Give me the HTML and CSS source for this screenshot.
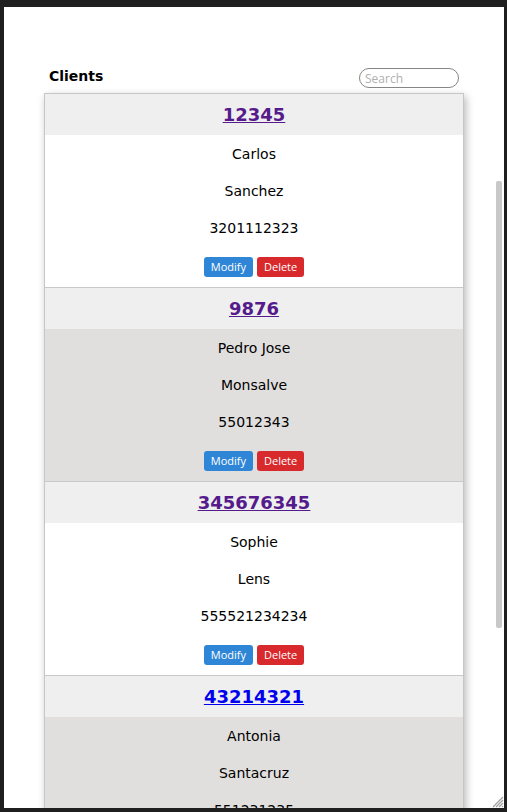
FILE: index.html
```html
<!DOCTYPE html>
<html>
<head>
<meta charset="utf-8">
<link rel="stylesheet" href="styles.css">
</head>
<body>
<div class="frame">
  <div class="content">
    <div class="toolbar">
      <span class="title">Clients</span>
      <input class="search" type="text" placeholder="Search">
    </div>
    <div class="list">
      <div class="item">
        <div class="item-head"><a class="id visited" href="#">12345</a></div>
        <div class="item-body">
          <div class="line">Carlos</div>
          <div class="line">Sanchez</div>
          <div class="line">3201112323</div>
          <div class="actions"><button class="btn modify">Modify</button><button class="btn delete">Delete</button></div>
        </div>
      </div>
      <div class="item alt">
        <div class="item-head"><a class="id visited" href="#">9876</a></div>
        <div class="item-body">
          <div class="line">Pedro Jose</div>
          <div class="line">Monsalve</div>
          <div class="line">55012343</div>
          <div class="actions"><button class="btn modify">Modify</button><button class="btn delete">Delete</button></div>
        </div>
      </div>
      <div class="item">
        <div class="item-head"><a class="id visited" href="#">345676345</a></div>
        <div class="item-body">
          <div class="line">Sophie</div>
          <div class="line">Lens</div>
          <div class="line">555521234234</div>
          <div class="actions"><button class="btn modify">Modify</button><button class="btn delete">Delete</button></div>
        </div>
      </div>
      <div class="item alt">
        <div class="item-head"><a class="id" href="#">43214321</a></div>
        <div class="item-body">
          <div class="line">Antonia</div>
          <div class="line">Santacruz</div>
          <div class="line">551231235</div>
          <div class="actions"><button class="btn modify">Modify</button><button class="btn delete">Delete</button></div>
        </div>
      </div>
    </div>
  </div>
  <div class="scroll-thumb"></div>
  <svg class="grip" width="14" height="14" viewBox="0 0 14 14">
    <path d="M13 3 L3 13 M13 6 L6 13 M13 9 L9 13 M13 12 L12 13" stroke="#a0a0a0" stroke-width="1.2" fill="none"/>
  </svg>
</div>
</body>
</html>
```
FILE: styles.css
```css
html, body {
  margin: 0;
  padding: 0;
}
body {
  background: #1f1f1f;
  padding: 7px 3px 4px 4px;
  height: 812px;
  box-sizing: border-box;
  overflow: hidden;
}
.frame {
  position: relative;
  background: #ffffff;
  height: 801px;
  overflow: hidden;
}
.content {
  padding: 61px 40px 0 40px;
  font-family: "DejaVu Sans", sans-serif;
}
.toolbar {
  display: flex;
  justify-content: space-between;
  align-items: center;
  height: 20px;
  padding: 0 5px 0 5px;
  margin-bottom: 5px;
}
.title {
  font-weight: bold;
  font-size: 14px;
  color: #000;
  position: relative;
  top: -2px;
}
.search {
  width: 100px;
  height: 20px;
  box-sizing: border-box;
  border: 1px solid #858585;
  border-radius: 10px;
  padding: 0 5px;
  font-family: "Open Sans", "Noto Sans", sans-serif;
  font-size: 12px;
  outline: none;
  background: #fff;
}
.search::placeholder {
  color: #b0b0b0;
}
.list {
  border: 1px solid #c6c6c6;
  box-shadow: 2px 3px 8px rgba(0, 0, 0, 0.28);
  background: #fff;
}
.item + .item {
  border-top: 1px solid #c8c8c8;
}
.item-head {
  background: #efefef;
  height: 41px;
  display: flex;
  align-items: center;
  justify-content: center;
}
.id {
  font-weight: bold;
  font-size: 18px;
  color: #0000ee;
  text-decoration: underline;
}
.id.visited {
  color: #551a8b;
}
.item-body {
  background: #ffffff;
  padding-bottom: 10px;
}
.item.alt .item-body {
  background: #e0dfde;
}
.line {
  height: 37px;
  display: flex;
  align-items: center;
  justify-content: center;
  font-size: 14px;
  color: #000;
}
.actions {
  margin-top: 11px;
  display: flex;
  justify-content: center;
  gap: 4px;
}
.btn {
  height: 20px;
  border: none;
  border-radius: 3px;
  padding: 0 7px;
  font-family: "Open Sans", "Noto Sans", sans-serif;
  font-size: 11px;
  color: #fff;
  line-height: 20px;
}
.modify {
  background: #2f86d6;
}
.delete {
  background: #d8292c;
}
.scroll-thumb {
  position: absolute;
  left: 492px;
  top: 174px;
  width: 6px;
  height: 447px;
  background: #c8c8c8;
  border-radius: 2px;
}
.grip {
  position: absolute;
  right: 0;
  bottom: 0;
}
```
